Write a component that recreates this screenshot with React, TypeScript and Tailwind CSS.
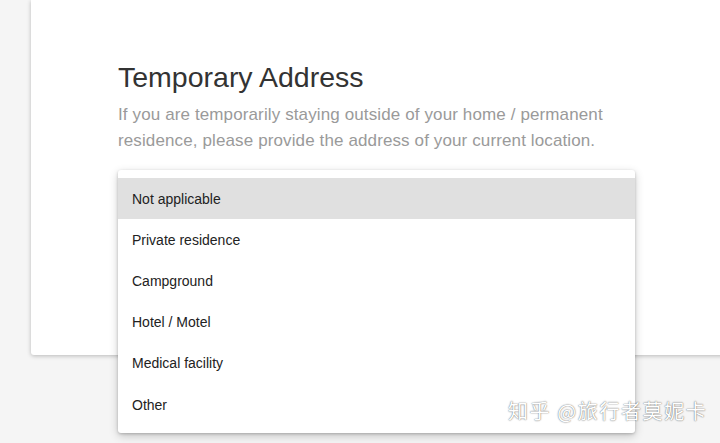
const options = [
  'Not applicable',
  'Private residence',
  'Campground',
  'Hotel / Motel',
  'Medical facility',
  'Other',
];

export default function App() {
  return (
    <div
      className="relative w-[720px] h-[443px] overflow-hidden bg-[#f5f5f5] pl-[31px]"
      style={{ fontFamily: '"Liberation Sans", Arial, sans-serif' }}
    >
      {/* form card, runs off the top and right edge */}
      <div className="h-[355px] w-[720px] rounded-bl-[3px] bg-white pl-[87px] pt-[60px] shadow-[0_1px_4px_rgba(0,0,0,0.25)]">
        <h2 className="text-[28.5px] leading-[34px] text-[#333333]">Temporary Address</h2>
        <p className="mt-[8px] w-[510px] text-[17px] leading-[26px] tracking-[0.12px] text-[#9a9a9a]">
          If you are temporarily staying outside of your home / permanent residence, please provide the address of your current location.
        </p>
      </div>

      {/* open select menu */}
      <ul className="absolute left-[118px] top-[170px] w-[517px] rounded-[3px] bg-white py-[8px] shadow-[0_3px_10px_rgba(0,0,0,0.2),0_1px_3px_rgba(0,0,0,0.2)]">
        {options.map((opt, i) => (
          <li
            key={opt}
            className={`flex h-[41.2px] items-center px-[14px] pt-[1px] text-[14px] text-[#222222] ${i === 0 ? 'bg-[#e0e0e0]' : ''}`}
          >
            {opt}
          </li>
        ))}
      </ul>

      <div
        className="absolute left-[508px] top-[396px] text-[20px] tracking-[1.6px] text-white [text-shadow:0_0_1px_rgba(0,0,0,0.55),0_0_2px_rgba(0,0,0,0.3)]"
        style={{ fontFamily: '"Noto Sans CJK SC", "Liberation Sans", sans-serif' }}
      >
        知乎 @旅行者莫妮卡
      </div>
    </div>
  );
}
